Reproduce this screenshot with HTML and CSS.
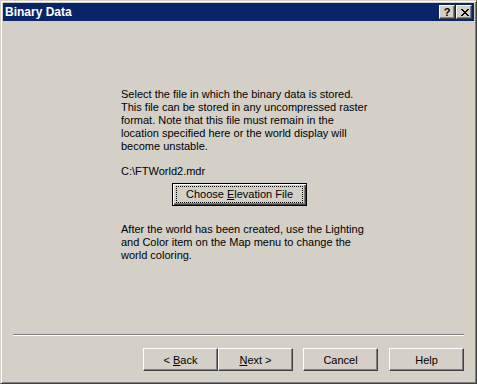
FILE: index.html
```
<!DOCTYPE html>
<html lang="en">
<head>
  <meta charset="UTF-8">
  <title>Binary Data</title>
  <link rel="stylesheet" href="styles.css">
</head>
<body>
<div class="window">
  <div class="titlebar">
    <span class="title">Binary Data</span>
    <div class="caption-buttons">
      <button class="caption-btn help-btn">?</button>
      <button class="caption-btn close-btn">
        <svg width="8" height="7" viewBox="0 0 8 7" shape-rendering="crispEdges">
          <path d="M0 0h2v1H0zM6 0h2v1H6zM1 1h2v1H1zM5 1h2v1H5zM2 2h4v1H2zM3 3h2v1H3zM2 4h4v1H2zM1 5h2v1H1zM5 5h2v1H5zM0 6h2v1H0zM6 6h2v1H6z" fill="#000"/>
        </svg>
      </button>
    </div>
  </div>

  <div class="content">
    <p>
      Select the file in which the binary data is stored.<br>
      This file can be stored in any uncompressed raster<br>
      format. Note that this file must remain in the<br>
      location specified here or the world display will<br>
      become unstable.
    </p>
    <p class="path">C:\FTWorld2.mdr</p>
    <button class="btn default-btn"><span class="focus">Choose <u>E</u>levation File</span></button>
    <p class="after">
      After the world has been created, use the Lighting<br>
      and Color item on the Map menu to change the<br>
      world coloring.
    </p>
  </div>

  <div class="separator"></div>

  <div class="footer">
    <button class="btn">&lt; <u>B</u>ack</button>
    <button class="btn"><u>N</u>ext &gt;</button>
    <button class="btn cancel">Cancel</button>
    <button class="btn help">Help</button>
  </div>
</div>
</body>
</html>
```

FILE: styles.css
```
body {
    margin: 0;
    font-family: "Liberation Sans", Arial, sans-serif;
    font-size: 11px;
}

.window {
    box-sizing: border-box;
    width: 477px;
    height: 384px;
    display: flex;
    flex-direction: column;
    padding: 2px;
    background: #d4d0c8;
    border: 1px solid;
    border-color: #d4d0c8 #404040 #404040 #d4d0c8;
    box-shadow: inset 1px 1px #fff, inset -1px -1px #808080;
}

.titlebar {
    height: 18px;
    display: flex;
    align-items: center;
    justify-content: space-between;
    background: #0a246a;
    color: #fff;
}

.title {
    padding-left: 2px;
    font-weight: bold;
    font-size: 12px;
    line-height: 18px;
}

.caption-buttons {
    display: flex;
    gap: 1px;
    padding-right: 2px;
}

.caption-btn {
    box-sizing: border-box;
    width: 16px;
    height: 14px;
    padding: 0;
    display: flex;
    align-items: center;
    justify-content: center;
    background: #d4d0c8;
    border: 1px solid;
    border-color: #fff #404040 #404040 #fff;
    box-shadow: inset -1px -1px #808080;
    font-family: "Liberation Sans", Arial, sans-serif;
    font-weight: bold;
    font-size: 11px;
    line-height: 12px;
    color: #000;
}

.close-btn svg {
    display: block;
    margin-left: 1px;
}

.content {
    flex: 1;
    padding: 67px 0 0 118px;
}

.content p {
    margin: 0;
    line-height: 13px;
    white-space: nowrap;
}

.content .path {
    margin-top: 12px;
}

.btn {
    box-sizing: border-box;
    width: 75px;
    height: 23px;
    padding: 0;
    background: #d4d0c8;
    border: 1px solid;
    border-color: #fff #404040 #404040 #fff;
    box-shadow: inset -1px -1px #808080;
    font-family: "Liberation Sans", Arial, sans-serif;
    font-size: 11px;
    color: #000;
}

.default-btn {
    display: block;
    width: 135px;
    margin: 5px 0 0 51px;
    border-color: #000;
    box-shadow: inset 1px 1px #fff, inset -1px -1px #404040, inset -2px -2px #808080;
}

.default-btn .focus {
    display: block;
    height: 15px;
    margin: 0 3px;
    border: 1px dotted #000;
    line-height: 15px;
    text-align: center;
}

.content .after {
    margin-top: 17px;
}

.separator {
    height: 2px;
    margin: 0 10px;
    border-top: 1px solid #808080;
    border-bottom: 1px solid #fff;
    box-sizing: border-box;
}

.footer {
    display: flex;
    justify-content: flex-end;
    padding: 12px 10px 10px 0;
}

.cancel {
    margin-left: 10px;
}

.help {
    margin-left: 11px;
}
```
